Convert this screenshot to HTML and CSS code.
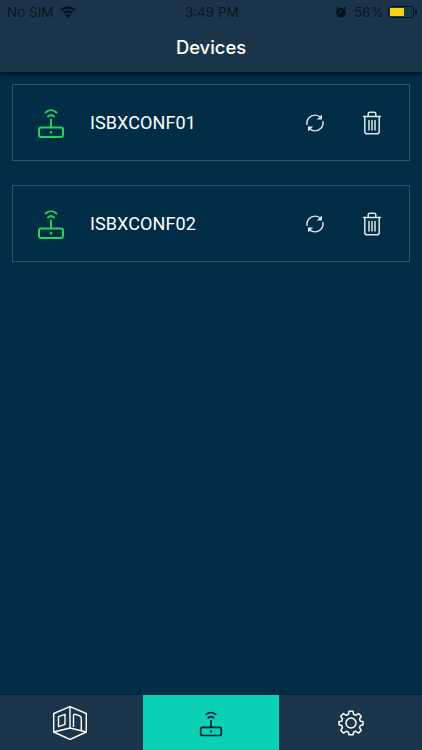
FILE: index.html
```html
<!DOCTYPE html>
<html lang="en">
<head>
<meta charset="utf-8">
<title>Devices</title>
<link rel="stylesheet" href="styles.css">
</head>
<body>
<svg class="defs" width="0" height="0" aria-hidden="true">
  <symbol id="router" viewBox="0 0 28 30">
    <g fill="none" stroke="currentColor" stroke-width="2" stroke-linecap="round" stroke-linejoin="round">
      <path d="M8.500 4.400C11.800 1.400 16.200 1.400 19.500 4.400"/>
      <path d="M10.900 8.400C12.800 6.800 15.200 6.800 17.100 8.400"/>
      <path d="M14 11.500V19"/>
      <rect x="2" y="19.500" width="24" height="9.500" rx="2"/>
    </g>
    <circle cx="14" cy="24.300" r="1.300" fill="currentColor"/>
  </symbol>
  <symbol id="sync" viewBox="0 0 20 20">
    <g fill="none" stroke="currentColor" stroke-width="1.300" stroke-linecap="round">
      <path d="M2 11.500C1.200 6.500 5 2.200 10 2.200C12.400 2.200 14.400 3.100 15.900 4.800"/>
      <path d="M18 8.500C18.800 13.500 15 17.800 10 17.800C7.600 17.800 5.600 16.900 4.100 15.200"/>
    </g>
    <path d="M17 1.400V6.600H11.800Z" fill="currentColor"/>
    <path d="M3 18.600V13.400H8.200Z" fill="currentColor"/>
  </symbol>
  <symbol id="trash" viewBox="0 0 20 24">
    <g fill="none" stroke="currentColor" stroke-width="1.500" stroke-linecap="round" stroke-linejoin="round">
      <path d="M1.500 5.400H18.500"/>
      <path d="M6.200 5V2.800C6.200 1.800 7 1.200 8 1.200H12C13 1.200 13.800 1.800 13.800 2.800V5"/>
      <path d="M2.800 5.600V20.400C2.800 21.800 3.800 22.800 5.200 22.800H14.800C16.200 22.800 17.200 21.800 17.200 20.400V5.600"/>
      <path d="M7 9.500V19M10 9.500V19M13 9.500V19"/>
    </g>
  </symbol>
</svg>

<div class="app">
  <header class="topbar">
    <div class="status">
      <div class="status-left">
        <span>No SIM</span>
        <svg class="wifi" viewBox="0 0 16 12"><path d="M8 12L5.600 9.200C7 8 9 8 10.400 9.200ZM4.500 8 3 6.200C5.900 3.900 10.100 3.900 13 6.200L11.500 8C9.500 6.400 6.500 6.400 4.500 8ZM1.900 5 .3 3.200C4.700-.5 11.300-.5 15.700 3.200L14.100 5C10.600 2 5.400 2 1.900 5Z"/></svg>
      </div>
      <span class="clock">3:49 PM</span>
      <div class="status-right">
        <svg class="alarm" viewBox="0 0 12 12"><circle cx="6" cy="6.600" r="4.800"/><path d="M.5 2.600 2.600.6 3.500 1.400 1.300 3.500ZM11.500 2.600 9.400.6 8.500 1.400 10.700 3.500Z"/><path class="hand" d="M6 3.600V6.800H3.800"/></svg>
        <span>56%</span>
        <div class="battery"><div class="battery-fill"></div></div>
        <div class="battery-tip"></div>
      </div>
    </div>
    <h1 class="title">Devices</h1>
  </header>

  <main class="list">
    <section class="device">
      <svg class="ico-router"><use href="#router"/></svg>
      <span class="device-name">ISBXCONF01</span>
      <svg class="ico-sync"><use href="#sync"/></svg>
      <svg class="ico-trash"><use href="#trash"/></svg>
    </section>
    <section class="device">
      <svg class="ico-router"><use href="#router"/></svg>
      <span class="device-name">ISBXCONF02</span>
      <svg class="ico-sync"><use href="#sync"/></svg>
      <svg class="ico-trash"><use href="#trash"/></svg>
    </section>
  </main>

  <nav class="tabs">
    <div class="tab">
      <svg class="ico-rooms" viewBox="0 0 34 34" fill="none" stroke="currentColor" stroke-width="1.400" stroke-linejoin="round">
        <path d="M17 .7 33.300 7.500V26L17 33.500 .7 26V7.500Z"/>
        <path d="M17 .7V22L.7 26M17 22 33.300 26"/>
        <path d="M5.500 10.700 12 8.300V18.300L5.500 20.700Z"/>
        <path d="M20.500 21V9.500C20.500 8.500 21.300 8 22.300 8.300L26 9.500C27.500 10 28.300 11 28.300 12.500V25"/>
      </svg>
    </div>
    <div class="tab tab-active">
      <svg class="ico-router-tab"><use href="#router"/></svg>
    </div>
    <div class="tab">
      <svg class="ico-gear" viewBox="0 0 26 26" fill="none" stroke="currentColor" stroke-width="1.500" stroke-linejoin="round">
        <path d="M11 1.200H15L15.600 4.400L17.800 5.300L20.500 3.500L23.300 6.300L21.500 9L22.400 11.200L25 11.600V14.800L22.400 15.400L21.500 17.600L23.300 20.300L20.500 23.100L17.800 21.300L15.600 22.200L15 24.800H11L10.400 22.200L8.200 21.300L5.500 23.100L2.700 20.300L4.500 17.600L3.600 15.400L1 14.800V11.600L3.600 11.200L4.500 9L2.700 6.300L5.500 3.500L8.200 5.300L10.400 4.400Z"/>
        <circle cx="13" cy="13" r="5"/>
      </svg>
    </div>
  </nav>
</div>
</body>
</html>
```
FILE: styles.css
```css
* { box-sizing: border-box; }
html, body { margin: 0; padding: 0; }
body { width: 422px; height: 750px; overflow: hidden; background: #012c46; font-family: Roboto, "Liberation Sans", sans-serif; }
.defs { position: absolute; }
.app { display: flex; flex-direction: column; height: 750px; }

.topbar { height: 72px; flex: none; background: #1a3549; box-shadow: 0 2px 3px rgba(0,10,20,.7); position: relative; }
.status { height: 24px; padding: 0 5.500px 0 7px; display: grid; grid-template-columns: 1fr auto 1fr; align-items: center; font-family: Inter, "Liberation Sans", sans-serif; font-size: 13.500px; color: #06151f; }
.status-left { display: flex; align-items: center; gap: 6px; }
.wifi { width: 16px; height: 12px; fill: #02121d; }
.status-right { display: flex; align-items: center; justify-content: flex-end; }
.alarm { width: 12px; height: 12px; fill: #02121d; margin-right: 7px; }
.alarm .hand { fill: none; stroke: #1a3549; stroke-width: 1; }
.battery { width: 26px; height: 12px; margin-left: 4px; padding: 1px; border: 1px solid #06151f; border-radius: 3px; }
.battery-fill { width: 14px; height: 100%; background: #f7d013; }
.battery-tip { width: 1.500px; height: 4px; margin-left: 1px; background: #06151f; }
.title { margin: 13px 0 0; text-align: center; font-family: Inter, Roboto, sans-serif; font-size: 18.400px; line-height: 20px; font-weight: 500; color: #fff; }

.list { flex: 1; padding: 12px 12px 0; display: flex; flex-direction: column; gap: 24px; }
.device { height: 77px; display: flex; align-items: center; border: 1px solid #2f5468; padding-left: 24px; }
.ico-router { width: 28px; height: 30px; color: #1ed45a; flex: none; }
.device-name { margin-left: 25px; flex: 1; font-size: 18px; color: #fff; letter-spacing: .1px; }
.ico-sync { width: 20px; height: 20px; color: #dfe6ea; flex: none; margin-right: 36.500px; }
.ico-trash { width: 20px; height: 24px; color: #dfe6ea; flex: none; margin-right: 27.500px; }

.tabs { height: 55px; flex: none; display: grid; grid-template-columns: 143px 136px 143px; background: #1a3549; box-shadow: 0 -1px 1px rgba(0,10,20,.25); }
.tab { display: flex; align-items: center; justify-content: center; color: #fff; }
.tab-active { background: #0ad0b6; color: #06222f; }
.ico-rooms { width: 34px; height: 34px; margin-right: 3px; }
.ico-router-tab { width: 24px; height: 27px; margin-top: 1px; }
.ico-gear { width: 26px; height: 26px; }
```
